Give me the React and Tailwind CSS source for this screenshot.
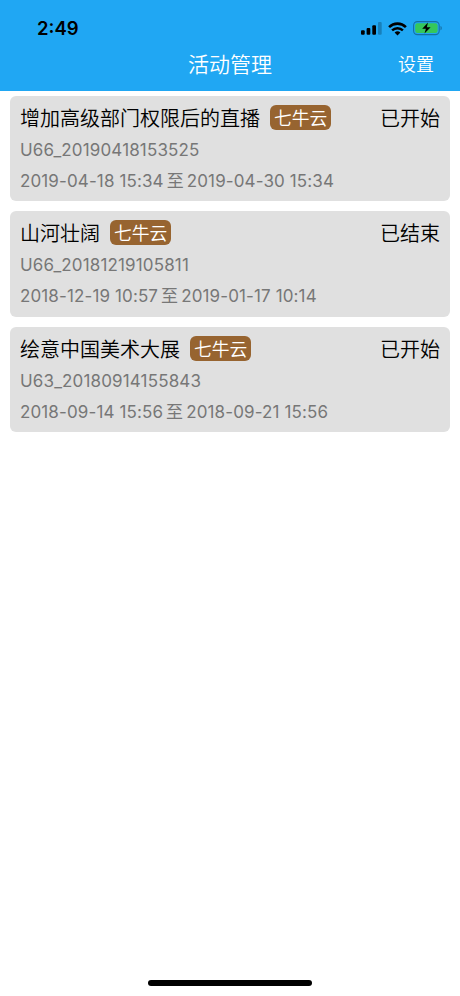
const activities = [
  {
    id: "U66_20190418153525",
    title: "增加高级部门权限后的直播",
    provider: "七牛云",
    status: "已开始",
    start: "2019-04-18 15:34",
    end: "2019-04-30 15:34",
  },
  {
    id: "U66_20181219105811",
    title: "山河壮阔",
    provider: "七牛云",
    status: "已结束",
    start: "2018-12-19 10:57",
    end: "2019-01-17 10:14",
  },
  {
    id: "U63_20180914155843",
    title: "绘意中国美术大展",
    provider: "七牛云",
    status: "已开始",
    start: "2018-09-14 15:56",
    end: "2018-09-21 15:56",
  },
]

const SignalIcon = () => (
  <svg width="22" height="13" viewBox="0 0 22 13">
    <rect x="0" y="8.3" width="3.7" height="4.4" rx="1" fill="#000" />
    <rect x="5.6" y="6" width="3.7" height="6.7" rx="1" fill="#000" />
    <rect x="11.3" y="3.2" width="3.7" height="9.5" rx="1" fill="#000" />
    <rect x="17" y="0" width="3.7" height="12.7" rx="1" fill="#1780bb" />
  </svg>
)

const WifiIcon = () => (
  <svg width="19" height="14" viewBox="0 0 19 14" fill="none" stroke="#000">
    <path d="M1.1 5.1A12 12 0 0 1 17.9 5.1" strokeWidth="2.6" />
    <path d="M4.1 8.4A7.7 7.7 0 0 1 14.9 8.4" strokeWidth="2.4" />
    <path d="M9.5 13.5L6.6 10.6A4.2 4.2 0 0 1 12.4 10.6Z" fill="#000" stroke="none" />
  </svg>
)

const BatteryIcon = () => (
  <svg width="30" height="15" viewBox="0 0 30 15">
    <rect x="0.6" y="0.6" width="25.6" height="13" rx="3.8" fill="none" stroke="#1670a4" strokeWidth="1.1" />
    <rect x="2.2" y="2.2" width="22.4" height="9.8" rx="2.3" fill="#35c75a" />
    <path d="M27.5 4.9C29.2 5.5 29.2 8.7 27.5 9.3Z" fill="#1670a4" />
    <path d="M15 1.6L9.2 7.8H12.9L11.5 12.6L17.6 6.3H13.8Z" fill="#000" />
  </svg>
)

const Header = () => (
  <header className="h-[91px] bg-[#20a7f3]">
    <div className="flex h-[45px] items-start justify-between pl-[37px] pr-[17px] pt-[16px]">
      <span className="font-['Inter'] text-[18.5px] font-semibold leading-[24px] text-black">2:49</span>
      <div className="flex items-center pt-[5px]">
        <SignalIcon />
        <div className="ml-[5px] mr-[6px]">
          <WifiIcon />
        </div>
        <BatteryIcon />
      </div>
    </div>
    <div className="grid h-[40px] grid-cols-3 items-center px-[26px] font-[350] text-white">
      <span />
      <h1 className="text-center text-[21px] leading-[30px]">活动管理</h1>
      <button className="justify-self-end text-[18px] leading-[30px]">设置</button>
    </div>
  </header>
)

const ActivityCard = ({ activity }) => (
  <li className="h-[105.3px] rounded-[6px] bg-[#e0e0e0] px-[10px] pt-[8px]">
    <div className="flex h-[30px] items-start font-[350] text-black">
      <h2 className="text-[20px] leading-[30px]">{activity.title}</h2>
      <span className="ml-[10px] mt-[1px] h-[25px] rounded-[6px] bg-[#976430] px-[4px] text-[17.8px] leading-[27px] text-white">
        {activity.provider}
      </span>
      <span className="ml-auto text-[20px] leading-[30px]">{activity.status}</span>
    </div>
    <p className="mt-[1px] h-[31px] text-[17px] leading-[31px] tracking-[0.15px] text-[#777777]">{activity.id}</p>
    <p className="flex h-[31px] text-[17px] leading-[31px] tracking-[0.12px] text-[#777777]">
      <span>{activity.start}</span>
      <span className="mx-[3px]">至</span>
      <span>{activity.end}</span>
    </p>
  </li>
)

const App = () => {
  return (
    <div className="flex h-[996px] w-[460px] flex-col bg-white font-['Inter','Noto_Sans_CJK_SC',sans-serif]">
      <Header />
      <ul className="flex flex-1 flex-col gap-[10px] px-[10px] pt-[5px]">
        {activities.map((activity) => (
          <ActivityCard key={activity.id} activity={activity} />
        ))}
      </ul>
      <div className="mx-auto mb-[10px] h-[6px] w-[164px] rounded-full bg-black" />
    </div>
  )
}

export default App
